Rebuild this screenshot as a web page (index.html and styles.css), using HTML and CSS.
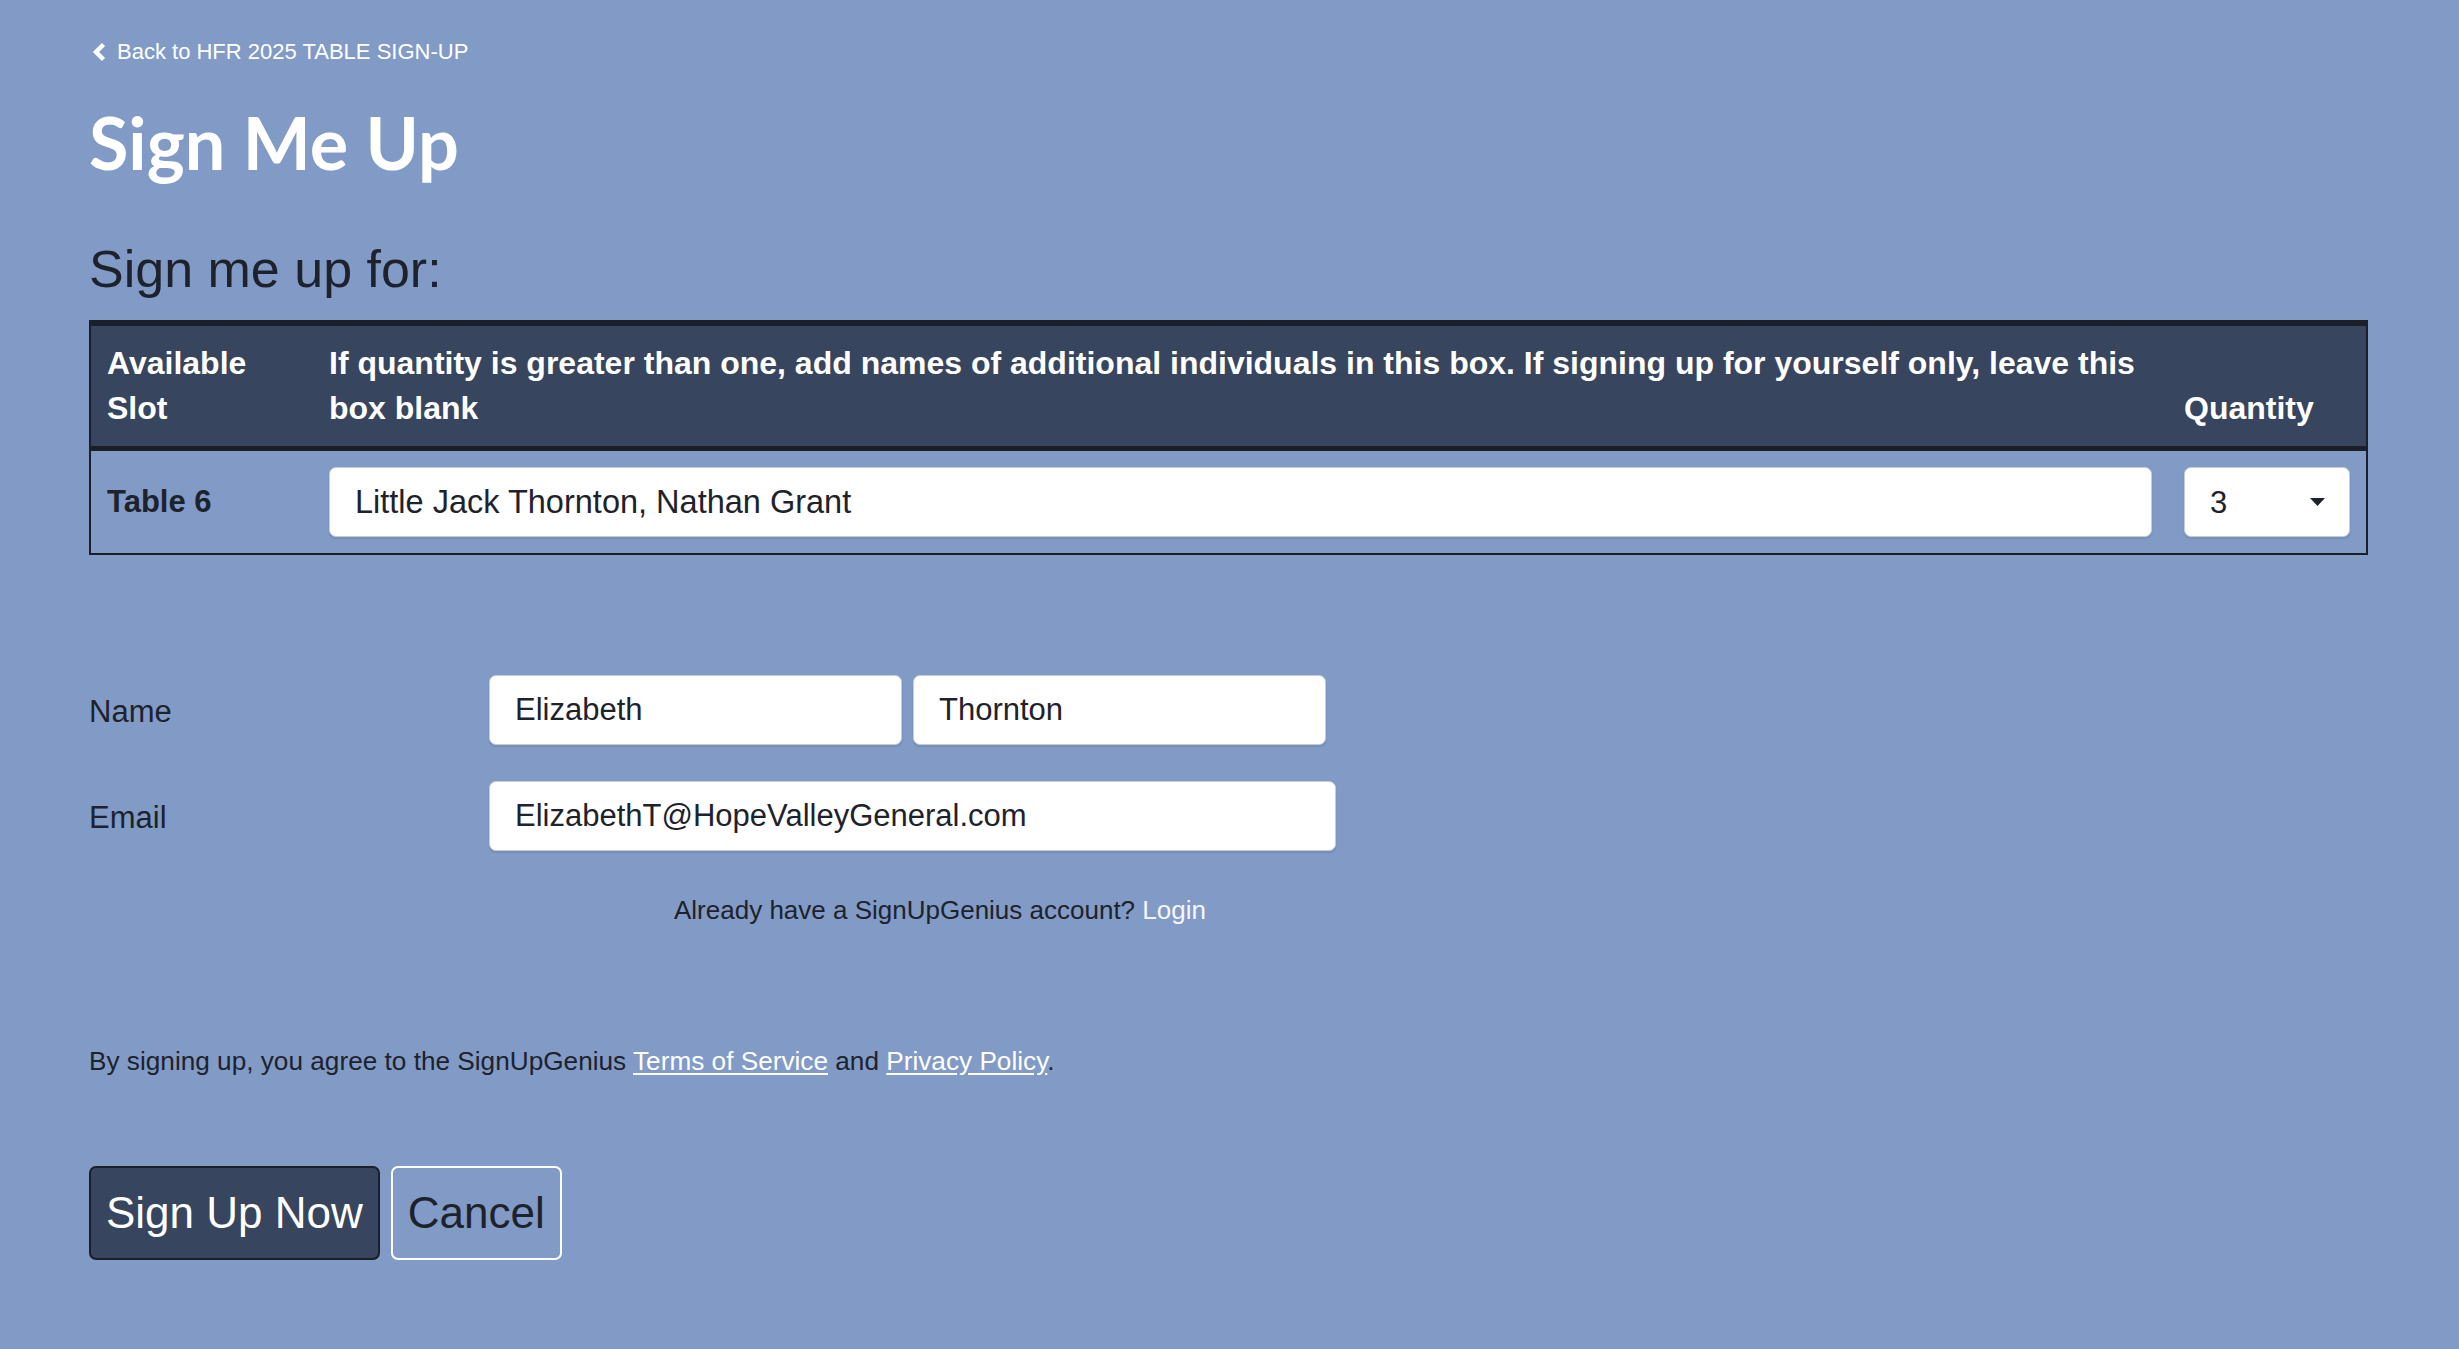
FILE: index.html
```html
<!DOCTYPE html>
<html lang="en">
<head>
    <meta charset="UTF-8">
    <meta name="viewport" content="width=device-width, initial-scale=1.0">
    <title>Sign Me Up - HFR 2025 Table Sign-Up</title>
    <link rel="stylesheet" href="styles.css">
</head>
<body>
    <div class="page">
        <a href="#" class="back-link">
            <svg class="back-icon" width="16" height="20" viewBox="0 0 16 20">
                <polyline points="12.5,2.5 5,10 12.5,17.5" fill="none" stroke="#fff" stroke-width="4.5" stroke-linejoin="miter"/>
            </svg>
            Back to HFR 2025 TABLE SIGN-UP
        </a>

        <h1 class="page-title">Sign Me Up</h1>

        <h2 class="section-title">Sign me up for:</h2>

        <table class="slot-table">
            <thead>
                <tr>
                    <th class="col-slot">Available Slot</th>
                    <th class="col-names">If quantity is greater than one, add names of additional individuals in this box. If signing up for yourself only, leave this box blank</th>
                    <th class="col-qty">Quantity</th>
                </tr>
            </thead>
            <tbody>
                <tr>
                    <td class="slot-name">Table 6</td>
                    <td><input type="text" class="field field-wide" value="Little Jack Thornton, Nathan Grant"></td>
                    <td>
                        <div class="select-wrap">
                            <select class="field qty-select">
                                <option>1</option>
                                <option>2</option>
                                <option selected>3</option>
                                <option>4</option>
                            </select>
                            <svg class="select-caret" width="15" height="8" viewBox="0 0 15 8">
                                <polygon points="0,0 15,0 7.5,8" fill="#1e222c"/>
                            </svg>
                        </div>
                    </td>
                </tr>
            </tbody>
        </table>

        <form class="signup-form">
            <div class="form-row">
                <label class="form-label">Name</label>
                <div class="form-fields">
                    <input type="text" class="field field-name" value="Elizabeth">
                    <input type="text" class="field field-name" value="Thornton">
                </div>
            </div>
            <div class="form-row">
                <label class="form-label">Email</label>
                <div class="form-fields">
                    <input type="email" class="field field-email" value="ElizabethT@HopeValleyGeneral.com">
                </div>
            </div>

            <p class="login-note">Already have a SignUpGenius account? <a href="#">Login</a></p>

            <p class="terms">By signing up, you agree to the SignUpGenius <a href="#">Terms of Service</a> and <a href="#">Privacy Policy</a>.</p>

            <div class="actions">
                <button type="submit" class="btn btn-primary">Sign Up Now</button>
                <button type="button" class="btn btn-outline">Cancel</button>
            </div>
        </form>
    </div>
</body>
</html>
```

FILE: styles.css
```css
body {
    margin: 0;
    background-color: #819bc6;
    font-family: "Liberation Sans", Arial, sans-serif;
    color: #1e222c;
}

.page {
    padding: 37px 91px 60px 89px;
}

.back-link {
    display: flex;
    align-items: center;
    gap: 10px;
    height: 30px;
    padding-left: 2px;
    color: #fff;
    font-size: 22px;
    text-decoration: none;
}

.page-title {
    margin: 30px 0 0;
    font-family: Lato, "Open Sans", sans-serif;
    font-weight: 700;
    font-size: 72px;
    line-height: 90px;
    color: #fff;
}

.section-title {
    margin: 52px 0 0;
    font-weight: 400;
    font-size: 52px;
    line-height: 60px;
    color: #1e222c;
}

/* signup slot table */
.slot-table {
    width: 100%;
    margin-top: 21px;
    border-collapse: separate;
    border-spacing: 0;
    border: 2px solid #1b1f27;
    border-top: 6px solid #1b1f27;
}

.slot-table th {
    background-color: #37455e;
    color: #fff;
    font-size: 32px;
    line-height: 45px;
    text-align: left;
    vertical-align: bottom;
    padding: 15px 16px;
    border-bottom: 5px solid #1b1f27;
}

.slot-table .col-slot {
    width: 190px;
}

.slot-table .col-qty {
    width: 166px;
}

.slot-table td {
    padding: 16px;
    vertical-align: middle;
}

.slot-name {
    font-weight: 700;
    font-size: 31px;
}

.field {
    box-sizing: border-box;
    height: 70px;
    padding: 0 25px;
    border: 1px solid #c7cdd8;
    border-radius: 7px;
    background-color: #fff;
    box-shadow: 0 2px 2px rgba(30, 40, 60, 0.12);
    font-family: "Liberation Sans", Arial, sans-serif;
    font-size: 31px;
    color: #1e222c;
    outline: none;
}

.field-wide {
    width: 100%;
    font-size: 32.5px;
}

.select-wrap {
    position: relative;
}

.qty-select {
    width: 100%;
    -webkit-appearance: none;
    appearance: none;
}

.select-caret {
    position: absolute;
    right: 25px;
    top: 31px;
    pointer-events: none;
}

/* name and email form */
.signup-form {
    margin-top: 120px;
}

.form-row {
    display: flex;
    align-items: center;
    margin-bottom: 36px;
}

.form-label {
    width: 400px;
    padding-top: 3px;
    font-size: 31px;
}

.form-fields {
    display: flex;
    gap: 11px;
}

.field-name {
    width: 413px;
}

.field-email {
    width: 847px;
}

/* collapses with the row margin above it */
.login-note {
    margin: 41px 0 0 585px;
    font-size: 26px;
    line-height: 36px;
}

.login-note a {
    color: #f4f6fb;
    text-decoration: none;
}

.terms {
    margin: 115px 0 0;
    font-size: 26.2px;
    line-height: 36px;
}

.terms a {
    color: #fff;
    text-decoration: underline;
    text-underline-offset: 3px;
}

.actions {
    display: flex;
    gap: 11px;
    margin-top: 87px;
}

.btn {
    height: 94px;
    padding: 0 15px;
    border-radius: 7px;
    font-family: "Liberation Sans", Arial, sans-serif;
    font-size: 44px;
    cursor: pointer;
}

.btn-primary {
    background-color: #37455e;
    border: 2px solid #1b1f27;
    color: #fff;
}

.btn-outline {
    background-color: transparent;
    border: 2px solid #fff;
    color: #1e222c;
}
```
